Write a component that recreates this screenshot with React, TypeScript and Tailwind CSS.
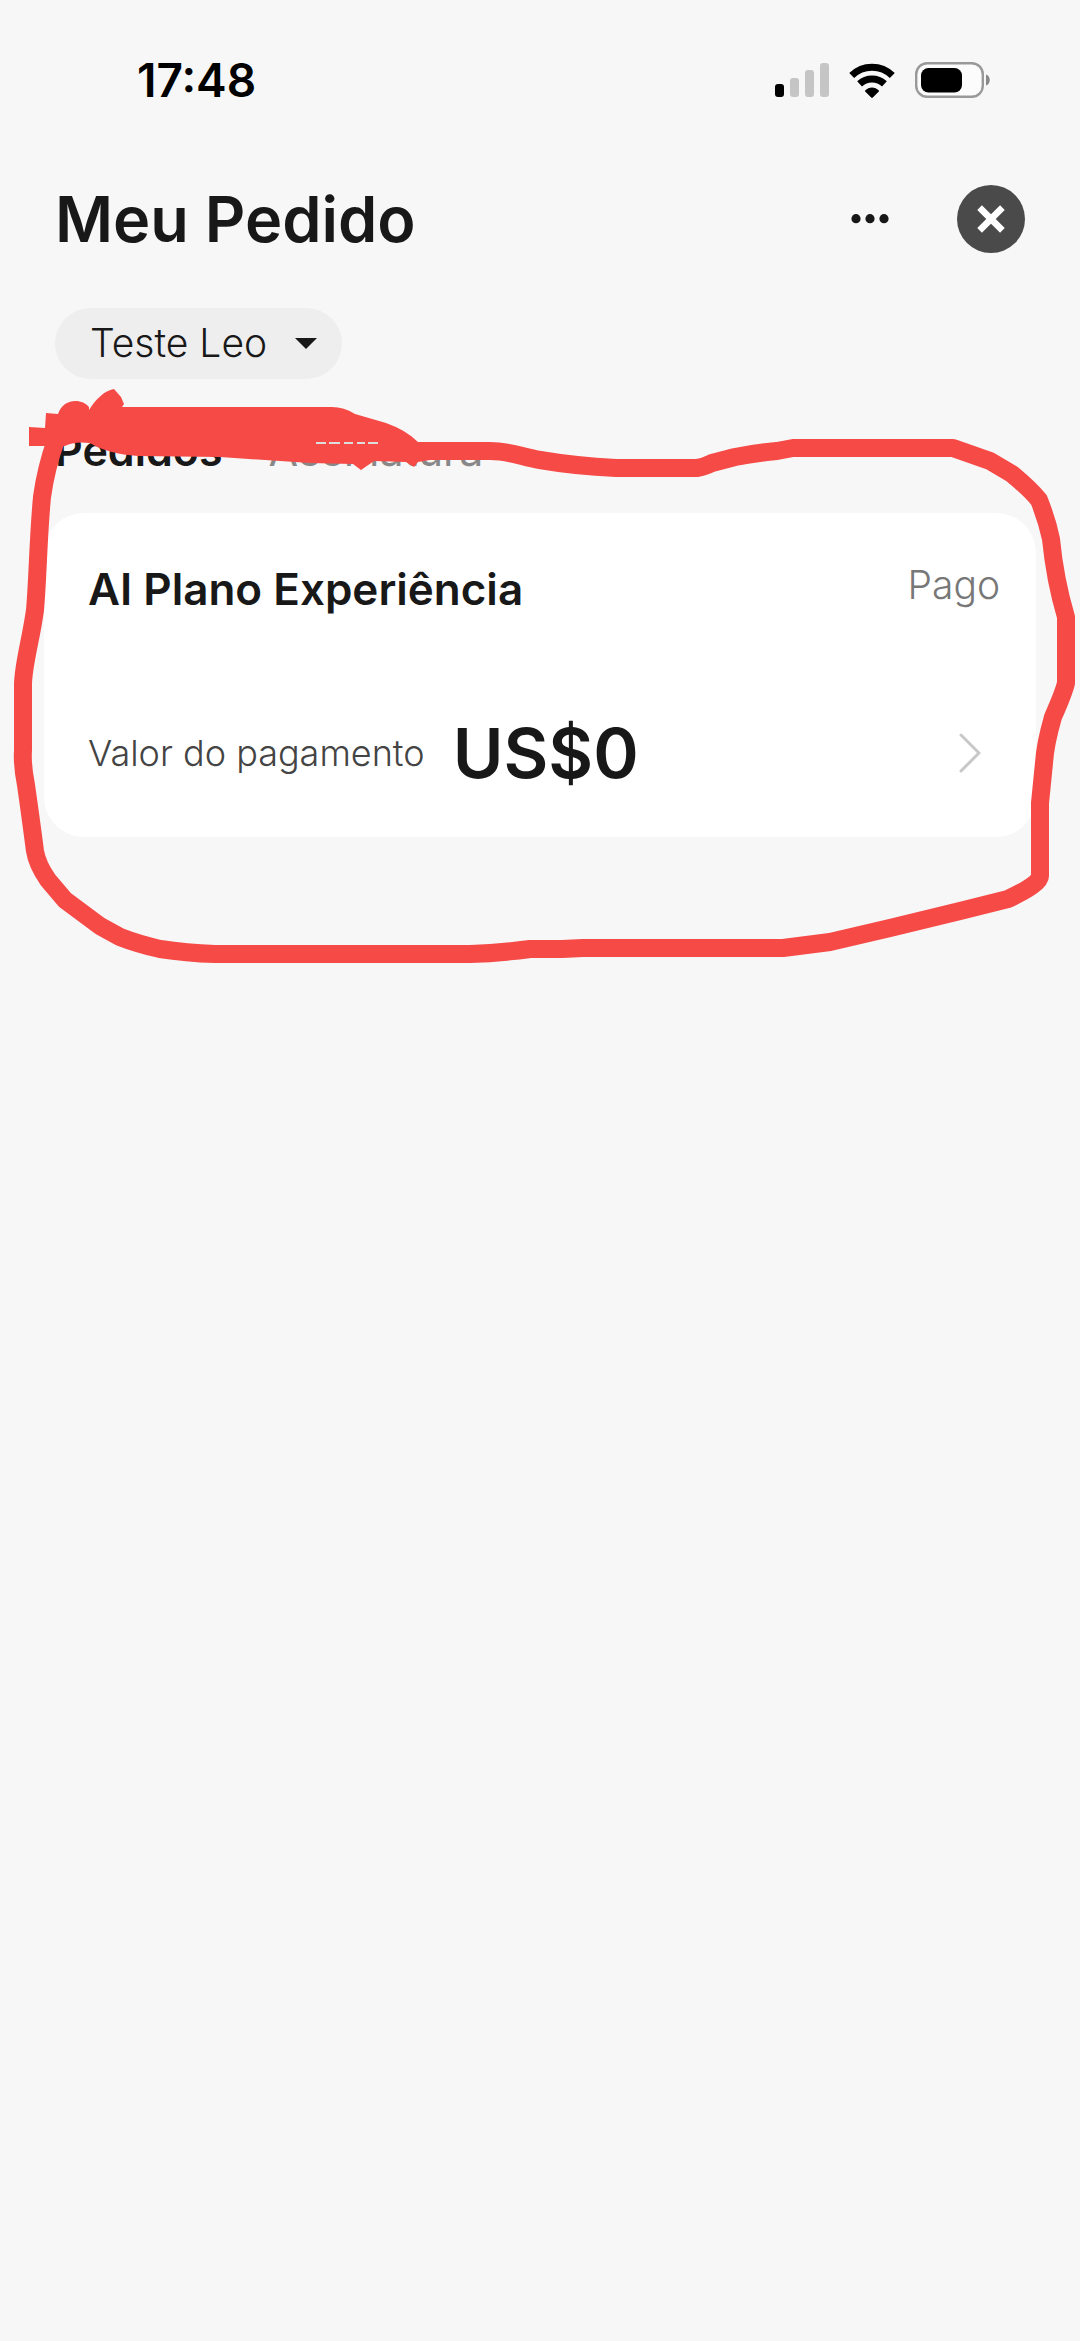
import type { ReactNode } from "react"

const bars = ["h-[13px] bg-black", "h-[19px] bg-[#c5c5c5]", "h-[27px] bg-[#c5c5c5]", "h-[34px] bg-[#c5c5c5]"]

function StatusBar() {
  return (
    <div className="flex h-[160px] items-center justify-between pr-[89px] pl-[137px]">
      <time className="text-[46px] leading-[60px] font-semibold text-black">17:48</time>
      <div className="flex items-center">
        <div aria-hidden className="flex items-end gap-[6px]">
          {bars.map((bar) => (
            <span key={bar} className={`w-[9px] rounded-[3px] ${bar}`} />
          ))}
        </div>
        <svg aria-hidden viewBox="0 0 46 35" className="ml-[20px] h-[35px] w-[46px]">
          <g fill="none" stroke="#000" strokeWidth="7">
            <path d="M2.7 12.6a29 29 0 0 1 40.6 0" />
            <path d="M10.6 20.9a18 18 0 0 1 24.8 0" />
          </g>
          <path d="M16.2 27.4c3.7-4 9.9-4 13.6 0 .4.4.3.8 0 1.2l-6 6c-.5.5-1.1.5-1.6 0l-6-6c-.3-.4-.4-.8 0-1.2z" />
        </svg>
        <svg aria-hidden viewBox="0 0 76 36" className="ml-[20px] h-[36px] w-[76px]">
          <rect x="1.2" y="1.2" width="66.6" height="33.6" rx="11" fill="#fcfcfc" stroke="#999" strokeWidth="2.4" />
          <rect x="6" y="6" width="41" height="24.5" rx="7.5" />
          <path d="M71 12.5c5 1.5 5 9.5 0 11z" fill="#888" />
        </svg>
      </div>
    </div>
  )
}

function Header() {
  return (
    <header className="flex h-[118px] items-center justify-between px-[55px]">
      <h1 className="text-[63px] leading-[68px] font-semibold">Meu Pedido</h1>
      <div className="flex items-center gap-[60px]">
        <button type="button" aria-label="Mais opções" className="flex h-[68px] items-center px-[8px]">
          <svg aria-hidden viewBox="0 0 38 10" className="h-[10px] w-[38px] fill-[#181818]">
            <circle cx="5" cy="4.7" r="4.6" />
            <circle cx="19" cy="4.7" r="4.6" />
            <circle cx="33" cy="4.7" r="4.6" />
          </svg>
        </button>
        <button
          type="button"
          aria-label="Fechar"
          className="flex size-[68px] items-center justify-center rounded-full bg-[#4a4a4a]"
        >
          <svg aria-hidden viewBox="0 0 28 28" className="h-[28px] w-[28px]">
            <path d="m2.6 2.6 22.8 22.8m0-22.8L2.6 25.4" stroke="#fff" strokeWidth="6.6" />
          </svg>
        </button>
      </div>
    </header>
  )
}

function AccountPicker() {
  return (
    <div className="relative ml-[55px] inline-flex">
      <select
        aria-label="Conta"
        className="h-[71px] appearance-none rounded-full bg-[#eee] pr-[74px] pl-[35px] text-[39px] font-light"
      >
        <option>Teste Leo</option>
      </select>
      <svg
        aria-hidden
        viewBox="0 0 22 11"
        className="pointer-events-none absolute top-[30px] right-[25px] h-[11px] w-[22px] fill-[#181818]"
      >
        <path d="M0 0h22L11 11z" />
      </svg>
    </div>
  )
}

function Tab({ active, children }: { active?: boolean; children: ReactNode }) {
  return (
    <button
      type="button"
      role="tab"
      aria-selected={!!active}
      className={active ? "font-semibold" : "font-normal text-[#888]"}
    >
      {children}
    </button>
  )
}

function OrderCard() {
  return (
    <a href="#pedido" className="mx-[44px] block rounded-[40px] bg-white pt-[46px] pr-[36px] pb-[44px] pl-[44px]">
      <div className="flex items-start justify-between">
        <h2 className="text-[44px] leading-[60px] font-semibold">AI Plano Experiência</h2>
        <span className="text-[39px] leading-[52px] font-light text-[#777]">Pago</span>
      </div>
      <div className="mt-[94px] flex items-center">
        <span className="text-[36px] leading-[52px] font-light text-[#444]">Valor do pagamento</span>
        <strong className="ml-[28px] text-[69px] leading-[80px] font-semibold">US$0</strong>
        <svg aria-hidden viewBox="0 0 22 40" className="mr-[19px] ml-auto h-[40px] w-[22px]">
          <path d="m2 2 18 18L2 38" fill="none" stroke="#c8c8c8" strokeWidth="3" strokeLinecap="round" />
        </svg>
      </div>
    </a>
  )
}

/** Hand-drawn marker ring around the order, with the scribble over the tabs. */
function MarkerRing() {
  return (
    <svg aria-hidden viewBox="0 0 1080 1000" className="pointer-events-none absolute top-0 left-0 w-full">
      <path
        d="M410 451H490C510 451 522 457 540 460Q575 466 616 468H697Q704 467 712 463L735 457Q755 453 777 451L793 448H953L990 461L1012 474Q1030 489 1039 500Q1047 520 1051 539Q1055 580 1066 617V683Q1064 692 1053 717Q1045 745 1044 763L1040 803V876Q1040 884 1008 899L960 911L890 928L830 942L783 948H583L562 949H530Q500 953 470 954H215Q186 953 160 949Q138 944 120 937L100 926L65 900L48 880Q37 864 35 851Q31 820 26 785Q22 765 23 750V685C23 665 31 640 35 610C38 575 38 540 42 497Q46 468 56 440"
        fill="none"
        stroke="#f64a47"
        strokeWidth="18"
        strokeLinejoin="round"
      />
      <path
        d="M29 427 45 428 46 413 58 414C63 398 82 398 89 407V410C96 399 104 391 114 389L121 397 124 404 122 407H332Q344 407 355 414L386 423Q406 430 418 442L430 460 418 462 414 467 406 462 374 461 361 470 353 464 310 463 220 457 138 456Q108 454 90 443Q74 441 65 446H29z"
        fill="#f64a47"
      />
      <path d="M316 443h10m3 0h11m4 0h9m4 0h8m3 0h10" stroke="#ddd" strokeWidth="2" />
    </svg>
  )
}

export default function App() {
  return (
    <div className="relative min-h-screen bg-[#f7f7f7] font-['Inter',sans-serif] text-[#181818]">
      <StatusBar />
      <Header />
      <main className="pt-[30px]">
        <AccountPicker />
        <div role="tablist" className="mt-[40px] mb-[32px] flex gap-[46px] px-[55px] text-[43px] leading-[62px]">
          <Tab active>Pedidos</Tab>
          <Tab>Assinatura</Tab>
        </div>
        <OrderCard />
      </main>
      <MarkerRing />
    </div>
  )
}
